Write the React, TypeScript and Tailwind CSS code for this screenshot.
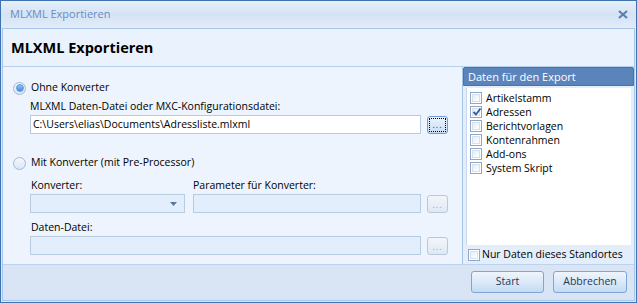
import React from "react";

const font = { fontFamily: '"Open Sans", "Noto Sans", sans-serif' };

function Radio({ checked }: { checked?: boolean }) {
  return (
    <span className="inline-flex w-[13px] h-[13px] rounded-full border border-[#9fb8d8] bg-gradient-to-b from-[#f4f8fd] to-[#dbe6f4] items-center justify-center shrink-0">
      {checked && (
        <span className="w-[8px] h-[8px] rounded-full bg-gradient-to-b from-[#8fc3f2] to-[#3f8ee0] border border-[#5a9ae0]" />
      )}
    </span>
  );
}

function Check({ checked }: { checked?: boolean }) {
  return (
    <span className="relative inline-block w-[12px] h-[12px] border border-[#8fa8c8] bg-white shrink-0">
      <span className="absolute inset-[1px] border border-[#d5e1ef] bg-gradient-to-br from-[#e6edf6] to-white" />
      {checked && (
        <svg className="absolute left-[1px] top-[0px]" width="10" height="10" viewBox="0 0 10 10">
          <path d="M1.5 5 L4 7.5 L8.5 1.5" stroke="#2e5b9a" strokeWidth="1.8" fill="none" />
        </svg>
      )}
    </span>
  );
}

function DotsButton({ focused, disabled }: { focused?: boolean; disabled?: boolean }) {
  return (
    <div
      className={`w-[21px] h-[18px] rounded-[3px] border flex items-center justify-center shrink-0 ${
        disabled
          ? "border-[#b8c9de] bg-gradient-to-b from-[#f2f6fb] to-[#dfe8f3]"
          : "border-[#6f9edb] bg-gradient-to-b from-[#eaf3fc] to-[#c9def4]"
      }`}
    >
      <div
        className={`w-[17px] h-[14px] flex items-end justify-center pb-[2px] ${
          focused ? "border border-dotted border-black rounded-[1px]" : ""
        }`}
      >
        <span className={`text-[9px] leading-none tracking-[1px] ${disabled ? "text-[#9aa8b8]" : "text-[#1d3f6d]"}`}>...</span>
      </div>
    </div>
  );
}

export default function App() {
  const items = ["Artikelstamm", "Adressen", "Berichtvorlagen", "Kontenrahmen", "Add-ons", "System Skript"];
  return (
    <div style={font} className="w-[637px] h-[303px] border border-[#3f72b0] bg-[#dce8f7] flex flex-col text-[10.5px] text-black overflow-hidden whitespace-nowrap">
      {/* title bar */}
      <div className="h-[27px] shrink-0 bg-gradient-to-b from-[#e6eff9] via-[#d4e3f5] to-[#e2ecf8] flex items-center justify-between pl-[9px] pr-[8px]">
        <span className="text-[11px] text-[#6a8cbf]">MLXML Exportieren</span>
        <svg width="10" height="9" viewBox="0 0 10 9">
          <path d="M1 1 L9 8 M9 1 L1 8" stroke="#5c7eae" strokeWidth="2.2" />
        </svg>
      </div>
      <div className="flex-1 mx-[1px] mb-[1px] border border-[#a6c6ec] flex flex-col min-h-0">
        {/* header */}
        <div className="h-[38px] shrink-0 bg-[#eaf2fd] border-b border-[#b7d0ee] flex items-center pl-[8px]">
          <span className="text-[14.5px] font-bold">MLXML Exportieren</span>
        </div>
        {/* main */}
        <div className="h-[198px] shrink-0 flex bg-[#edf4fd] border-b border-[#bcd3ef]">
          <div className="flex-1 pl-[10px] pt-[14px]">
            <div className="flex items-center gap-[5px] h-[14px]">
              <Radio checked />
              <span>Ohne Konverter</span>
            </div>
            <div className="pl-[17px] mt-[3px]">
              <div className="h-[16px] leading-[16px]">MLXML Daten-Datei oder MXC-Konfigurationsdatei:</div>
              <div className="flex items-center gap-[6px] mt-[1px]">
                <div className="w-[391px] h-[19px] bg-white border border-[#b7cbe2] pl-[2px] leading-[17px]">
                  C:\Users\elias\Documents\Adressliste.mlxml
                </div>
                <DotsButton focused />
              </div>
            </div>
            <div className="flex items-center gap-[5px] h-[14px] mt-[22px]">
              <Radio />
              <span>Mit Konverter (mit Pre-Processor)</span>
            </div>
            <div className="pl-[17px] mt-[7px]">
              <div className="flex gap-[8px]">
                <div>
                  <div className="h-[16px] leading-[16px] pl-[1px]">Konverter:</div>
                  <div className="w-[155px] h-[19px] bg-[#e3eefc] border border-[#b7cbe2] mt-[1px] flex items-center justify-end pr-[7px]">
                    <svg width="7" height="4" viewBox="0 0 7 4">
                      <path d="M0 0 H7 L3.5 4 Z" fill="#59779c" />
                    </svg>
                  </div>
                </div>
                <div>
                  <div className="h-[16px] leading-[16px]">Parameter für Konverter:</div>
                  <div className="flex items-center gap-[6px] mt-[1px]">
                    <div className="w-[228px] h-[19px] bg-[#e3eefc] border border-[#b7cbe2]" />
                    <DotsButton disabled />
                  </div>
                </div>
              </div>
              <div className="h-[16px] leading-[16px] mt-[6px] pl-[1px]">Daten-Datei:</div>
              <div className="flex items-center gap-[6px] mt-[1px]">
                <div className="w-[391px] h-[19px] bg-[#e3eefc] border border-[#b7cbe2]" />
                <DotsButton disabled />
              </div>
            </div>
          </div>
          {/* right panel */}
          <div className="w-[172px] shrink-0 flex flex-col border-l border-[#a8c4e6] bg-[#e4eefb]">
            <div className="h-[19px] bg-[#5b84bb] border border-[#4a72a8] text-white text-[11px] pl-[4px] leading-[17px] rounded-t-[2px]">
              Daten für den Export
            </div>
            <div className="mx-[3px] mt-[2px] h-[157px] bg-white border-l border-[#c7d8ee] pt-[3px] pl-[3px]">
              {items.map((it, i) => (
                <div key={it} className="flex items-center gap-[4px] h-[14px]">
                  <Check checked={i === 1} />
                  <span className="leading-[14px]">{it}</span>
                </div>
              ))}
            </div>
            <div className="flex items-center gap-[2px] pl-[5px] mt-[3px] h-[14px]">
              <Check />
              <span>Nur Daten dieses Standortes</span>
            </div>
          </div>
        </div>
        {/* footer */}
        <div className="flex-1 bg-[#d9e5f5] flex justify-end items-start pt-[6px] pr-[7px] gap-[9px]">
          <button className="w-[73px] h-[22px] rounded-[3px] border border-[#7ea5d6] bg-gradient-to-b from-[#eef5fd] via-[#dce9f8] to-[#c3daf3] text-[#1e395b] text-[10.5px]">
            Start
          </button>
          <button className="w-[74px] h-[22px] rounded-[3px] border border-[#7ea5d6] bg-gradient-to-b from-[#eef5fd] via-[#dce9f8] to-[#c3daf3] text-[#1e395b] text-[10.5px]">
            Abbrechen
          </button>
        </div>
      </div>
    </div>
  );
}
